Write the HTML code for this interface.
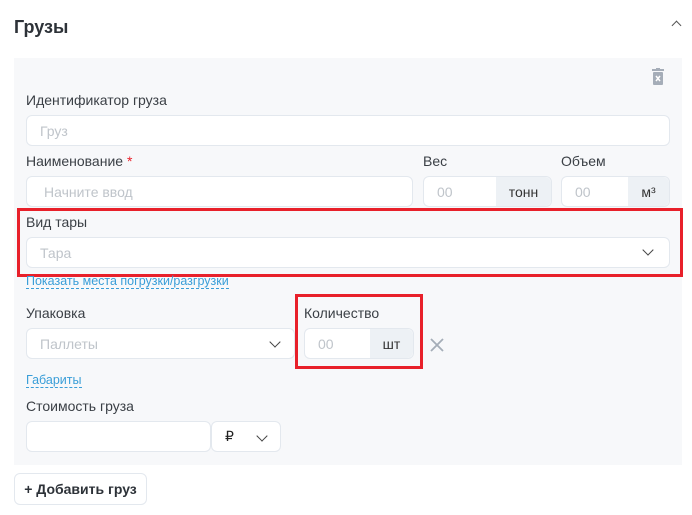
<!DOCTYPE html>
<html><head><meta charset="utf-8"><style>
*{box-sizing:border-box;margin:0;padding:0}
body{width:692px;height:515px;background:#fff;font-family:"Liberation Sans",sans-serif;position:relative;overflow:hidden;color:#333}
.a{position:absolute}
.t{font-size:14px;color:#3a3f45}
.in{position:absolute;background:#fff;border:1px solid #e3e8ee;border-radius:6px;font-size:14px;color:#bfc4ca;padding-left:13px;display:flex;align-items:center}
.u{position:absolute;background:#edf1f5;font-size:14px;color:#333;display:flex;align-items:center;justify-content:center;border-radius:0 6px 6px 0}
.red{position:absolute;border:3px solid #e8202a}
.lk{position:absolute;font-size:12.5px;color:#3a9ed8;border-bottom:1px dashed #3a9ed8;line-height:13px}
.chev{position:absolute;width:8px;height:8px;border-right:1.5px solid #444;border-bottom:1.5px solid #444;transform:rotate(45deg)}
</style></head><body>
<div class="a" style="left:14px;top:17px;font-size:18px;font-weight:bold;color:#2d3238">Грузы</div>
<div class="a" style="left:673px;top:22px;width:7px;height:7px;border-left:1.5px solid #555;border-top:1.5px solid #555;transform:rotate(45deg)"></div>
<div class="a" style="left:14px;top:58px;width:668px;height:407px;background:#f7f8fa"></div>
<svg class="a" style="left:651px;top:68px" width="14" height="18" viewBox="0 0 14 18"><rect x="1" y="1" width="12" height="2" fill="#a5adb8"/><rect x="5" y="0" width="4" height="2" fill="#a5adb8"/><rect x="2" y="4" width="10" height="13" rx="1" fill="#a5adb8"/><path d="M5 8l4 5M9 8l-4 5" stroke="#fff" stroke-width="1.5"/></svg>
<div class="a t" style="left:26px;top:92px">Идентификатор груза</div>
<div class="in" style="left:26px;top:115px;width:644px;height:31px">Груз</div>
<div class="a t" style="left:26px;top:153px">Наименование <span style="color:#e8202a">*</span></div>
<div class="a t" style="left:423px;top:153px">Вес</div>
<div class="a t" style="left:561px;top:153px">Объем</div>
<div class="in" style="left:26px;top:176px;width:387px;height:31px;padding-left:17px">Начните ввод</div>
<div class="in" style="left:423px;top:176px;width:129px;height:31px">00</div>
<div class="u" style="left:496px;top:177px;width:55px;height:29px">тонн</div>
<div class="in" style="left:561px;top:176px;width:109px;height:31px">00</div>
<div class="u" style="left:628px;top:177px;width:41px;height:29px">м³</div>
<div class="red" style="left:17px;top:208px;width:666px;height:69px"></div>
<div class="a t" style="left:26px;top:214px">Вид тары</div>
<div class="in" style="left:26px;top:237px;width:644px;height:31px">Тара</div>
<div class="chev" style="left:644px;top:246px"></div>
<div class="lk" style="left:26px;top:275px">Показать места погрузки/разгрузки</div>
<div class="a t" style="left:26px;top:305px">Упаковка</div>
<div class="in" style="left:26px;top:328px;width:269px;height:31px">Паллеты</div>
<div class="chev" style="left:271px;top:338px"></div>
<div class="red" style="left:295px;top:294px;width:128px;height:75px"></div>
<div class="a t" style="left:304px;top:305px">Количество</div>
<div class="in" style="left:304px;top:328px;width:110px;height:31px">00</div>
<div class="u" style="left:370px;top:329px;width:43px;height:29px">шт</div>
<svg class="a" style="left:430px;top:338px" width="14" height="14"><path d="M1 1l12 12M13 1L1 13" stroke="#a5adb8" stroke-width="1.8"/></svg>
<div class="lk" style="left:26px;top:374px">Габариты</div>
<div class="a t" style="left:26px;top:398px">Стоимость груза</div>
<div class="in" style="left:26px;top:421px;width:185px;height:31px"></div>
<div class="in" style="left:211px;top:421px;width:70px;height:31px;color:#222">₽</div>
<div class="chev" style="left:258px;top:432px"></div>
<div class="a" style="left:14px;top:473px;width:133px;height:32px;border:1px solid #e3e8ee;border-radius:6px;background:#fff;font-size:14px;font-weight:bold;color:#2d3238;display:flex;align-items:center;justify-content:center">+ Добавить груз</div>
</body></html>
